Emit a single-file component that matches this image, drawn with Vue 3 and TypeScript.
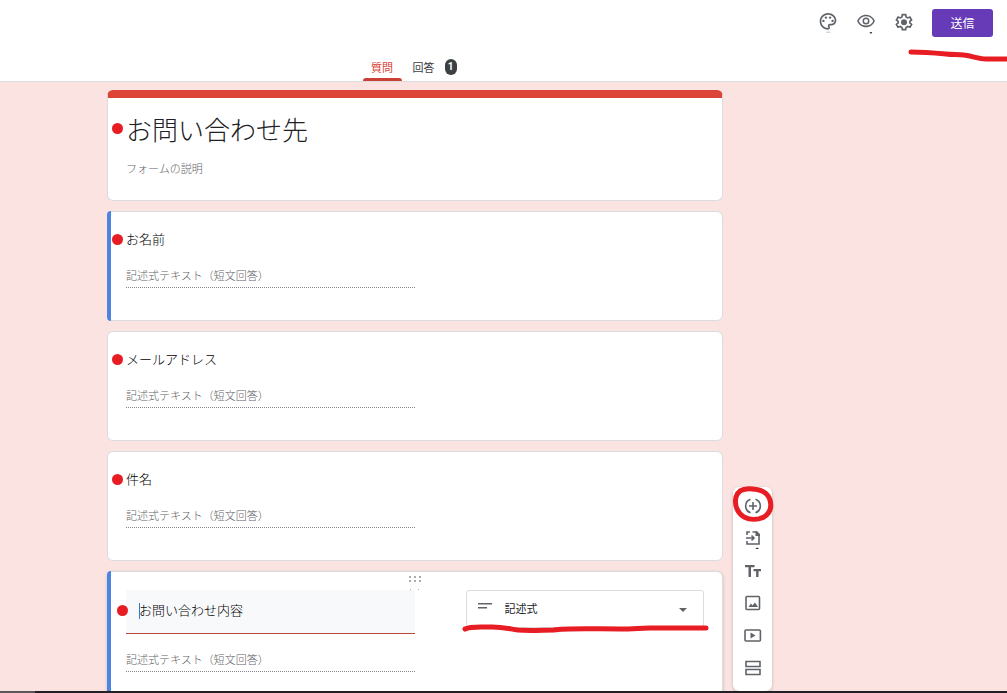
<script setup lang="ts">
import { ref } from 'vue'

interface Question {
  id: string
  title: string
  marked: boolean
}

const formTitle = 'お問い合わせ先'
const formDescription = 'フォームの説明'
const answerHint = '記述式テキスト（短文回答）'
const responseCount = 1

const questions: Question[] = [
  { id: 'name', title: 'お名前', marked: true },
  { id: 'mail', title: 'メールアドレス', marked: false },
  { id: 'subject', title: '件名', marked: false },
]

const activeTitle = ref('お問い合わせ内容')
const answerType = ref('short')
const tab = ref<'questions' | 'answers'>('questions')
</script>

<template>
  <div class="page">
    <header class="top">
      <div class="actions">
        <button class="icon" type="button" aria-label="テーマをカスタマイズ">
          <svg viewBox="0 2 24 24" width="20" height="20">
            <path d="M12 22C6.49 22 2 17.51 2 12S6.49 2 12 2s10 4.04 10 9c0 3.31-2.69 6-6 6h-1.77c-.28 0-.5.22-.5.5 0 .12.05.23.13.33.41.47.64 1.06.64 1.67A2.5 2.5 0 0 1 12 22zm0-18c-4.41 0-8 3.59-8 8s3.59 8 8 8c.28 0 .5-.22.5-.5a.54.54 0 0 0-.14-.35c-.41-.46-.63-1.05-.63-1.65a2.5 2.5 0 0 1 2.5-2.5H16c2.21 0 4-1.79 4-4 0-3.86-3.59-7-8-7z" />
            <circle cx="6.5" cy="11.5" r="1.4" />
            <circle cx="9.5" cy="7.5" r="1.4" />
            <circle cx="14.5" cy="7.5" r="1.4" />
            <circle cx="17.5" cy="11.5" r="1.4" />
            <path class="faint" d="M10 24.500h5v1h-5z" />
          </svg>
        </button>
        <button class="icon" type="button" aria-label="プレビュー">
          <svg viewBox="0 1 24 24" width="20" height="20">
            <path d="M12 3c3.700 0 6.800 1.700 9 4.700.7.900 1.300 1.800 1.700 2.800C21 14.900 16.900 18 12 18S3 14.900 1.300 10.500C3 6.100 7.100 3 12 3zm0 1.900c-3.900 0-7.200 2.200-8.700 5.600 1.500 3.400 4.800 5.600 8.700 5.600s7.200-2.200 8.700-5.600C19.200 7.100 15.900 4.900 12 4.900zm0 1.400a4.200 4.200 0 1 1 0 8.400 4.200 4.200 0 0 1 0-8.400zm0 1.800a2.400 2.400 0 1 0 0 4.800 2.400 2.400 0 0 0 0-4.800z" />
            <path class="dark" d="M16.500 24h2.800v1.400h-2.800z" />
          </svg>
        </button>
        <button class="icon" type="button" aria-label="設定">
          <svg viewBox="0 1 24 24" width="20" height="20">
            <path class="line" d="M10 3h4l.5 2.700 2 1.200 2.600-1 2 3.500-2.100 1.700v1.800l2.100 1.700-2 3.500-2.600-1-2 1.200L14 21h-4l-.5-2.700-2-1.200-2.600 1-2-3.500L5 12.900v-1.800L2.900 9.400l2-3.500 2.600 1 2-1.200z" />
            <circle cx="12" cy="12" r="3.600" />
          </svg>
        </button>
        <div class="send-wrap">
          <button class="send" type="button">送信</button>
          <svg class="mark send-mark" viewBox="0 0 104 16" width="104" height="16" aria-hidden="true">
            <path d="M4 5C16 5 28 6 39 7c7 1 12 0 18 1 9 1 14 4 22 4h25" />
          </svg>
        </div>
      </div>
      <nav class="tabs">
        <button class="tab" :class="{ on: tab === 'questions' }" type="button" @click="tab = 'questions'">質問</button>
        <button class="tab wide" :class="{ on: tab === 'answers' }" type="button" @click="tab = 'answers'">
          回答<span class="badge">{{ responseCount }}</span>
        </button>
      </nav>
    </header>

    <main class="body">
      <div class="cards">
        <section class="card intro">
          <span class="dot" aria-hidden="true"></span>
          <h1>{{ formTitle }}</h1>
          <p>{{ formDescription }}</p>
        </section>

        <section v-for="q in questions" :key="q.id" class="card question" :class="{ blue: q.marked }">
          <span class="dot" aria-hidden="true"></span>
          <label :for="q.id">{{ q.title }}</label>
          <input :id="q.id" class="answer" type="text" :placeholder="answerHint" disabled />
        </section>

        <section class="card active blue">
          <span class="dot" aria-hidden="true"></span>
          <svg class="grip" viewBox="0 0 14 18" width="14" height="18" aria-hidden="true">
            <path d="M1 1h2v2H1zM6 1h2v2H6zM11 1h2v2h-2zM1 5h2v2H1zM6 5h2v2H6zM11 5h2v2h-2zM2 14h1v1H2zM10 14h1v1h-1z" />
          </svg>
          <div class="row">
            <div class="title-field">
              <input v-model="activeTitle" type="text" aria-label="質問" />
              <span class="caret" aria-hidden="true"></span>
            </div>
            <div class="select-field">
              <svg class="lines" viewBox="0 0 14 6" width="14" height="6" aria-hidden="true">
                <path d="M0 0h14v1.500H0zM0 4h9v1.500H0z" />
              </svg>
              <select v-model="answerType" aria-label="回答の形式">
                <option value="short">記述式</option>
              </select>
              <svg class="arrow" viewBox="0 0 8 4" width="8" height="4" aria-hidden="true">
                <path d="M0 0h8L4 4z" />
              </svg>
              <svg class="mark select-mark" viewBox="0 0 248 12" width="248" height="12" aria-hidden="true">
                <path d="M3 6C8 3 17 4 30 4c12 0 18 2 26 3 12 1 25 0 36 0 10-2 40-1 66-1 14 0 20-1 30-1h56" />
              </svg>
            </div>
          </div>
          <input class="answer" type="text" :placeholder="answerHint" aria-label="回答" disabled />
        </section>
      </div>

      <aside class="tools">
        <button type="button" aria-label="質問を追加">
          <svg viewBox="0 0 20 20" width="20" height="20">
            <path class="line" d="M7.500 3.200a7.200 7.200 0 0 0 0 13.600M12.500 3.200a7.200 7.200 0 0 1 0 13.600M10 6v8M6 10h8" />
          </svg>
          <svg class="mark ring" viewBox="0 0 42 38" width="42" height="38" aria-hidden="true">
            <path d="M21 4C13 3 6 5 4 12c-2 9 2 16 8 20 6 3 14 3 20 0 6-4 8-10 6-17C36 8 29 4 19 4" />
          </svg>
        </button>
        <button type="button" aria-label="質問をインポート">
          <svg viewBox="0 0 20 20" width="20" height="20">
            <path class="line" d="M4 7V4h3M9.500 4h4L16 6.500V16H4v-3M3 10h7.500M8.500 7.500 11 10l-2.500 2.500" />
            <path d="M12.500 3.200h1.500L17 6.200V8h-4.500z" />
            <path class="dark" d="M12.500 21 14 19.500 16 21z" />
          </svg>
        </button>
        <button type="button" aria-label="タイトルと説明を追加">
          <svg viewBox="0 0 20 20" width="20" height="20">
            <path d="M2 4h9.500v2.300H8V16H5.500V6.300H2zM10.500 8H18v2.300h-2.500V16h-2.400v-5.700h-2.600z" />
          </svg>
        </button>
        <button type="button" aria-label="画像を追加">
          <svg viewBox="0 0 20 20" width="20" height="20">
            <rect class="line" x="3" y="3.500" width="13.500" height="13" rx="1" />
            <path d="M5.500 14 8 10.500 9.500 12.500 12 9.500l3 4.500z" />
          </svg>
        </button>
        <button type="button" aria-label="動画を追加">
          <svg viewBox="0 0 20 20" width="20" height="20">
            <rect class="line" x="2" y="4" width="15.400" height="11" rx="1" />
            <path d="M7.500 6.500v6l5-3z" />
          </svg>
        </button>
        <button type="button" aria-label="セクションを追加">
          <svg viewBox="0 0 20 20" width="20" height="20">
            <path class="line" d="M3 3.500h14v5H3zM3 11.500h14v5H3z" />
          </svg>
        </button>
      </aside>
    </main>
    <div class="edge" aria-hidden="true"></div>
  </div>
</template>

<style>
body {
  margin: 0;
}
</style>

<style scoped>
.page {
  display: flex;
  flex-direction: column;
  height: 100vh;
  overflow: hidden;
  background: #fae3e1;
  color: #202124;
  font-family: "Noto Sans CJK JP", sans-serif;
  font-size: 13px;
  font-weight: 300;
}

.page *,
.page *::before {
  box-sizing: border-box;
}

button,
input,
select {
  margin: 0;
  padding: 0;
  border: 0;
  background: none;
  color: inherit;
  font: inherit;
}

svg {
  display: block;
  overflow: visible;
  fill: #5f6368;
}

.line {
  fill: none;
  stroke: #5f6368;
  stroke-width: 2;
}

.tools .line {
  stroke-width: 1.6;
}

.faint {
  fill: #b5b5b5;
}

.dark {
  fill: #202124;
}

.top {
  display: flex;
  flex-direction: column;
  justify-content: space-between;
  flex: none;
  height: 82px;
  background: #fff;
  border-bottom: 1px solid #dadce0;
}

.actions {
  display: flex;
  align-items: center;
  justify-content: flex-end;
  gap: 18px;
  padding: 9px 14px 0;
}

.send-wrap {
  position: relative;
}

.send {
  display: block;
  width: 61px;
  height: 28px;
  padding-bottom: 2px;
  border-radius: 3px;
  background: #673ab7;
  color: #fff;
  font-size: 12px;
  font-weight: 400;
}

.mark {
  position: absolute;
  pointer-events: none;
  fill: none;
  stroke: #e81c23;
  stroke-width: 5;
  stroke-linecap: round;
  stroke-linejoin: round;
}

.send-mark {
  left: -25px;
  top: 38px;
}

.tabs {
  display: flex;
  justify-content: center;
  padding-left: 10.63%;
  padding-right: 28.2%;
}

.tab {
  position: relative;
  display: flex;
  align-items: center;
  justify-content: center;
  width: 39px;
  height: 28px;
  padding-bottom: 1px;
  font-size: 11px;
  font-weight: 400;
  color: #3c4043;
}

.tab.wide {
  gap: 10px;
  width: 66px;
}

.tab.on {
  color: #db4437;
}

.tab.on::after {
  content: "";
  position: absolute;
  inset: auto 0 0;
  height: 3px;
  border-radius: 3px 3px 0 0;
  background: #cb4035;
}

.badge {
  width: 12px;
  border-radius: 6px;
  background: #3c4043;
  color: #fff;
  font-family: Roboto, sans-serif;
  font-size: 10px;
  font-weight: 700;
  line-height: 16px;
  text-align: center;
}

.body {
  display: grid;
  grid-template-columns: minmax(0, 616fr) minmax(0, 284fr);
  flex: 1;
  min-height: 0;
  padding-left: 10.63%;
  overflow: hidden;
}

.cards {
  display: flex;
  flex-direction: column;
  gap: 10px;
  min-height: 0;
  padding-top: 8px;
}

.card {
  position: relative;
  flex: none;
  padding: 17px 18px 32px;
  border: 1px solid #dadce0;
  border-radius: 6px;
  background: #fff;
}

.card.blue::before {
  content: "";
  position: absolute;
  inset: -1px auto -1px -1px;
  width: 4px;
  border-radius: 6px 0 0 6px;
  background: #4d84e0;
}

.dot {
  position: absolute;
  left: 4px;
  top: 22px;
  z-index: 1;
  width: 11px;
  height: 11px;
  border-radius: 50%;
  background: #e81c23;
}

.intro {
  padding: 12px 18px 22px;
  border-top: 8px solid #db4437;
}

.intro .dot {
  top: 25px;
}

h1,
p {
  margin: 0;
  font-weight: 300;
}

h1 {
  font-size: 26px;
  line-height: 38px;
}

p {
  margin-top: 10px;
  color: #5f6368;
  font-size: 11px;
  line-height: 20px;
}

label {
  display: block;
  margin-bottom: 15px;
  line-height: 20px;
  color: #000;
}

.answer {
  display: block;
  width: 50%;
  height: 24px;
  padding-bottom: 2px;
  border-bottom: 1px dotted #80868b;
  font-size: 11px;
}

.answer::placeholder {
  color: #5f6368;
  opacity: 1;
}

.active {
  padding-top: 18px;
  padding-bottom: 40px;
  box-shadow: 0 1px 3px rgba(60, 64, 67, 0.25);
}

.active .dot {
  left: 9px;
  top: 33px;
}

.grip {
  position: absolute;
  left: 50%;
  top: 3px;
  z-index: 1;
  margin-left: -7px;
  fill: #aaadb0;
}

.row {
  display: grid;
  grid-template-columns: minmax(0, 288fr) minmax(0, 238fr);
  column-gap: 51px;
  align-items: start;
  margin-bottom: 14px;
}

.title-field,
.select-field {
  position: relative;
}

.title-field input {
  display: block;
  width: 100%;
  height: 44px;
  padding: 0 13px 4px;
  border-bottom: 1px solid #b8453c;
  background: #f8f9fa;
  color: #000;
  outline: 0;
}

.caret {
  position: absolute;
  left: 13px;
  top: 13px;
  width: 1px;
  height: 16px;
  background: #2f7bd0;
}

.select-field select {
  display: block;
  width: 100%;
  height: 38px;
  padding: 0 38px 2px;
  border: 1px solid #dadce0;
  border-radius: 3px;
  appearance: none;
  font-size: 11px;
  font-weight: 400;
}

.lines,
.arrow {
  position: absolute;
  pointer-events: none;
}

.lines {
  left: 12px;
  top: 13px;
}

.arrow {
  right: 17px;
  top: 18px;
}

.select-mark {
  left: -4px;
  top: 33px;
}

.tools {
  display: flex;
  flex-direction: column;
  align-items: center;
  justify-content: space-between;
  align-self: end;
  width: 39px;
  height: 204px;
  margin-left: 10px;
  padding: 9px 0 13px;
  border-radius: 6px;
  background: #fff;
  box-shadow: 0 1px 3px rgba(60, 64, 67, 0.3);
}

.tools button {
  position: relative;
}

.ring {
  left: -11px;
  top: -11px;
}

.edge {
  flex: none;
  height: 2px;
  background: linear-gradient(to right, #5c5558 35px, #231f24 35px);
}
</style>
